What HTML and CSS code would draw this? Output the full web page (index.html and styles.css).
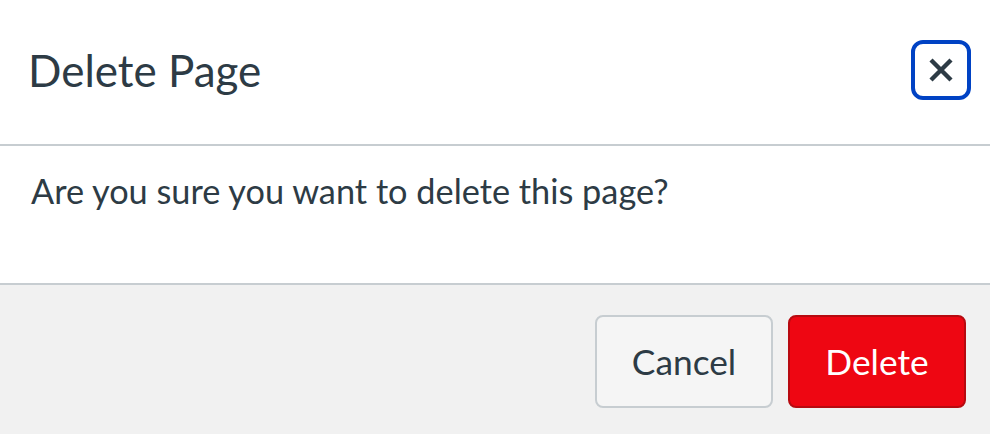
FILE: index.html
```html
<!DOCTYPE html>
<html lang="en">
<head>
<meta charset="utf-8">
<title>Delete Page</title>
<link rel="stylesheet" href="styles.css">
</head>
<body>
<div class="dialog">
  <header class="dialog-header">
    <h2 class="dialog-title">Delete Page</h2>
    <button class="close-btn" aria-label="Close">
      <svg viewBox="0 0 26 26" width="26" height="26" aria-hidden="true">
        <path d="M3 3 L23 23 M23 3 L3 23" stroke="#2d3b45" stroke-width="4.4" stroke-linecap="butt" fill="none"/>
      </svg>
    </button>
  </header>
  <div class="dialog-body">
    <p class="message">Are you sure you want to delete this page?</p>
  </div>
  <footer class="dialog-footer">
    <button class="btn btn-cancel">Cancel</button>
    <button class="btn btn-delete">Delete</button>
  </footer>
</div>
</body>
</html>
```
FILE: styles.css
```css
* { box-sizing: border-box; }
html, body {
  margin: 0;
  padding: 0;
  width: 990px;
  height: 434px;
  background: #ffffff;
  overflow: hidden;
}
.dialog {
  display: flex;
  flex-direction: column;
  height: 434px;
  font-family: Lato, "Liberation Sans", sans-serif;
  color: #2d3b45;
}
.dialog-header {
  height: 146px;
  display: flex;
  align-items: center;
  justify-content: space-between;
  padding: 0 19px 4px 28px;
  border-bottom: 2px solid #c7cdd1;
}
.dialog-title {
  margin: 0;
  font-size: 44px;
  font-weight: 400;
  line-height: 1;
}
.close-btn {
  width: 60px;
  height: 60px;
  border: 4px solid #0042c4;
  border-radius: 12px;
  background: #ffffff;
  display: flex;
  align-items: center;
  justify-content: center;
  padding: 0;
}
.dialog-body {
  height: 139px;
  padding: 0 31px;
  border-bottom: 2px solid #c7cdd1;
  display: flex;
  align-items: flex-start;
}
.message {
  margin: 0;
  padding-top: 24px;
  font-size: 34.3px;
  line-height: 1.2;
}
.dialog-footer {
  flex: 1;
  background: #f1f1f1;
  display: flex;
  justify-content: flex-end;
  align-items: flex-start;
  gap: 15px;
  padding: 30px 24px 0 0;
}
.btn {
  height: 93px;
  border-radius: 8px;
  font-family: Lato, "Liberation Sans", sans-serif;
  font-size: 35.3px;
  padding: 0;
  display: flex;
  align-items: center;
  justify-content: center;
}
.btn-cancel {
  width: 178px;
  background: #f5f5f5;
  border: 2px solid #c7cdd1;
  color: #2d3b45;
}
.btn-delete {
  width: 178px;
  background: #ee0612;
  border: 2px solid #b70a10;
  color: #ffffff;
}
```
